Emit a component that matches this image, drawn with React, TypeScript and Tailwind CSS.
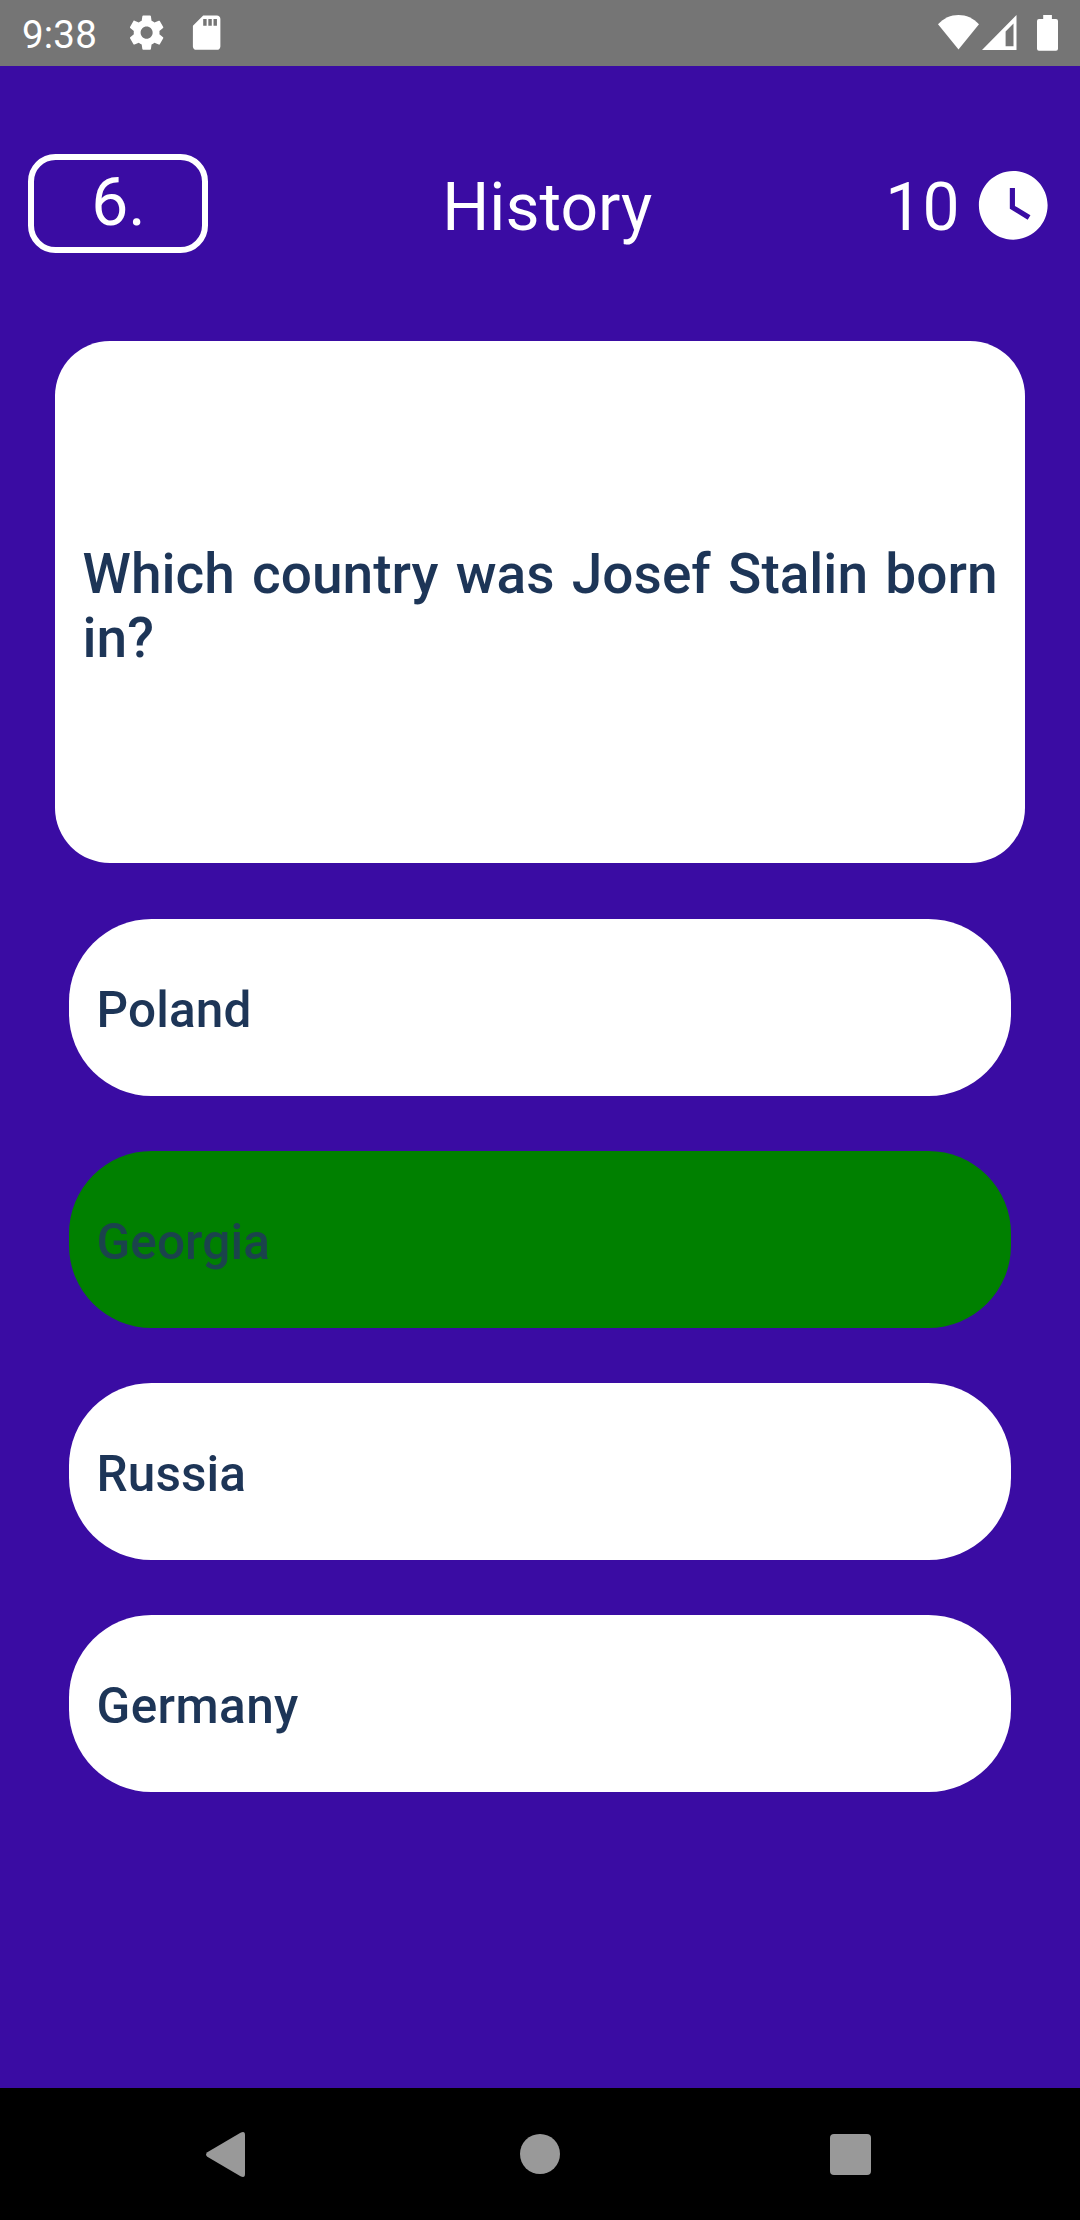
const answers = [
  { label: 'Poland', style: 'bg-white text-[#1d3557] tracking-[0.15px]' },
  { label: 'Georgia', style: 'bg-[#008000] text-[#1b434c] tracking-[0.1px]' },
  { label: 'Russia', style: 'bg-white text-[#1d3557] tracking-[0.1px]' },
  { label: 'Germany', style: 'bg-white text-[#1d3557] tracking-[0.42px]' },
];

function StatusBar() {
  return (
    <div className="flex h-[66px] w-full shrink-0 items-center justify-between bg-[#757575] pl-[22px] pr-[22px] text-white">
      <div className="flex items-center">
        <span className="w-[104px] pt-[2px] text-[38.5px] leading-[45px] tracking-[0.2px]">9:38</span>
        <svg className="h-[41.25px] w-[41.25px]" viewBox="0 0 24 24" fill="currentColor">
          <path d="M19.43 12.98c.04-.32.07-.64.07-.98s-.03-.66-.07-.98l2.11-1.65c.19-.15.24-.42.12-.64l-2-3.46c-.12-.22-.39-.3-.61-.22l-2.49 1c-.52-.4-1.08-.73-1.69-.98l-.38-2.65C14.46 2.18 14.25 2 14 2h-4c-.25 0-.46.18-.49.42l-.38 2.65c-.61.25-1.17.59-1.69.98l-2.49-1c-.23-.09-.49 0-.61.22l-2 3.46c-.13.22-.07.49.12.64l2.11 1.65c-.04.32-.07.65-.07.98s.03.66.07.98l-2.11 1.65c-.19.15-.24.42-.12.64l2 3.46c.12.22.39.3.61.22l2.49-1c.52.4 1.08.73 1.69.98l.38 2.65c.03.24.24.42.49.42h4c.25 0 .46-.18.49-.42l.38-2.65c.61-.25 1.17-.59 1.69-.98l2.49 1c.23.09.49 0 .61-.22l2-3.46c.12-.22.07-.49-.12-.64l-2.11-1.65zM12 15.5c-1.93 0-3.5-1.57-3.5-3.5s1.57-3.5 3.5-3.5 3.5 1.57 3.5 3.5-1.57 3.5-3.5 3.5z" />
        </svg>
        <svg className="ml-[19px] h-[41.25px] w-[41.25px]" viewBox="0 0 24 24" fill="currentColor">
          <path d="M18 2h-8L4.02 8 4 20c0 1.1.9 2 2 2h12c1.1 0 2-.9 2-2V4c0-1.1-.9-2-2-2zm-6 6h-2V4h2v4zm3 0h-2V4h2v4zm3 0h-2V4h2v4z" />
        </svg>
      </div>
      <div className="flex items-center">
        <svg className="h-[36px] w-[41px]" viewBox="0 0 41 36" fill="currentColor">
          <path d="M0 9.3C5.6 3.2 12.700 0 20.500 0S35.400 3.200 41 9.300L20.500 34.500z" />
        </svg>
        <svg className="ml-[3px] h-[36px] w-[34.5px]" viewBox="0 0 34.5 36" fill="currentColor" fillRule="evenodd">
          <path d="M34.500 0V35H0zM31.500 8.500L23.600 16.500V31.200H31.500z" />
        </svg>
        <svg className="ml-[20.5px] h-[36px] w-[21px]" viewBox="0 0 21 36" fill="currentColor">
          <path d="M6.200 0h8.700v4H19a2 2 0 0 1 2 2v27.700a2 2 0 0 1-2 2H2a2 2 0 0 1-2-2V6a2 2 0 0 1 2-2h4.200z" />
        </svg>
      </div>
    </div>
  );
}

function Header() {
  return (
    <header className="mt-[88px] grid h-[99px] w-full shrink-0 grid-cols-[1fr_auto_1fr] items-center pl-[28px] pr-[25.5px] text-[66px] leading-[77px] text-white">
      <div className="flex h-[99px] w-[180px] items-center justify-center rounded-[27.5px] border-[6px] border-white pb-[3px] pl-px">
        6.
      </div>
      <h1 className="pl-[12px] pt-[7px]">History</h1>
      <div className="flex items-center justify-end">
        <span className="pt-[7px]">10</span>
        <svg className="ml-[12.5px] mt-[3px] h-[82.5px] w-[82.5px]" viewBox="0 0 24 24" fill="currentColor">
          <path d="M12 2C6.500 2 2 6.500 2 12s4.500 10 10 10 10-4.500 10-10S17.500 2 12 2zm4.200 14.200L11 13V7h1.500v5.200l4.500 2.700-.8 1.300z" />
        </svg>
      </div>
    </header>
  );
}

function NavigationBar() {
  return (
    <nav className="mt-auto flex h-[132px] w-full shrink-0 items-center justify-between bg-black pl-[206px] pr-[209px] text-[#999999]">
      <svg className="h-[45px] w-[39px]" viewBox="0 0 39 45" fill="currentColor">
        <path d="M1.300 20.200L34.500 0.800Q39-1.500 39 3V42Q39 46.500 34.500 44.200L1.300 24.800Q-1.200 22.500 1.300 20.200z" />
      </svg>
      <span className="ml-[4px] h-[40px] w-[40px] rounded-full bg-[#999999]" />
      <span className="h-[41px] w-[41px] rounded-[4px] bg-[#999999]" />
    </nav>
  );
}

export default function App() {
  return (
    <div className="flex h-[2220px] w-[1080px] flex-col overflow-hidden bg-[#3a0ca3] font-[Roboto,sans-serif]">
      <StatusBar />
      <Header />
      <main className="flex flex-col px-[55px] pt-[88px] font-medium">
        <section className="flex h-[522px] items-center rounded-[55px] bg-white px-[27.5px] text-[#1d3557]">
          <p className="w-full pt-[8px] text-justify text-[55px] leading-[64px]">
            Which country was Josef Stalin born in?
          </p>
        </section>
        <div className="mx-[14px] mt-[56px] flex flex-col gap-[55px]">
          {answers.map((answer) => (
            <button
              key={answer.label}
              className={`flex h-[177px] items-center rounded-[82.5px] px-[27.5px] pt-[5px] text-left text-[49.5px] leading-[58px] ${answer.style}`}
            >
              {answer.label}
            </button>
          ))}
        </div>
      </main>
      <NavigationBar />
    </div>
  );
}
